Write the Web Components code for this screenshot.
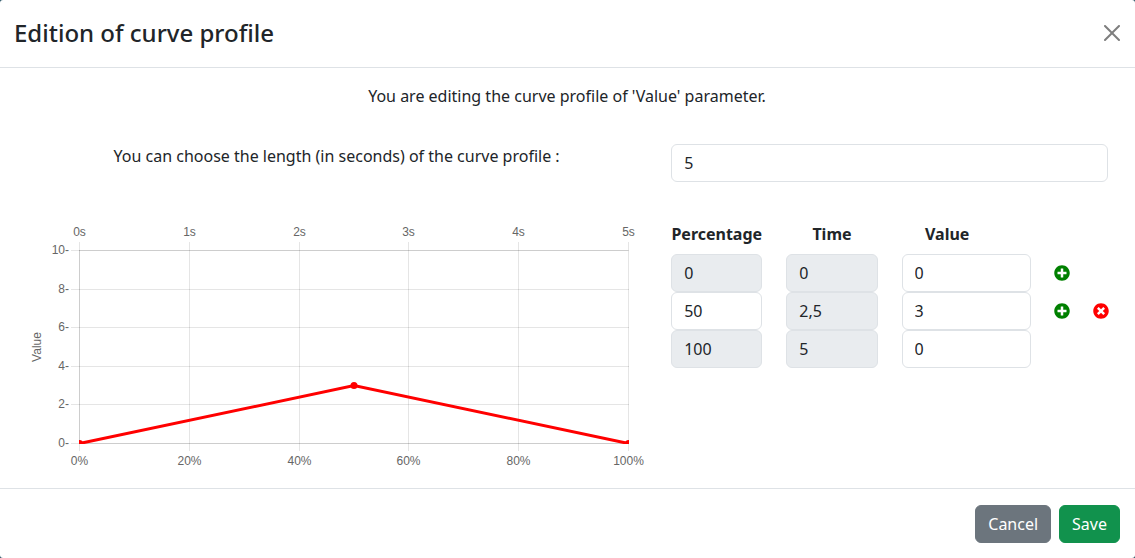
<!DOCTYPE html>
<html lang="en">
<head>
<meta charset="utf-8">
<meta name="viewport" content="width=device-width, initial-scale=1">
<title>Edition of curve profile</title>
<style>
  body {
    margin: 0;
    background: #2b5566;
    color: #212529;
    font: 16px/24px "Noto Sans", "Liberation Sans", sans-serif;
  }
</style>
</head>
<body>
<modal-dialog>
  <span slot="title">Edition of curve profile</span>
  <profile-editor parameter="Value" length="5"></profile-editor>
  <action-button slot="footer">Cancel</action-button>
  <action-button slot="footer" variant="success">Save</action-button>
</modal-dialog>

<script>
class BaseElement extends HTMLElement {
  render(html) {
    if (!this.shadowRoot) this.attachShadow({ mode: 'open' });
    this.shadowRoot.innerHTML = html;
  }
}

const POINTS = [
  { percentage: 0, time: '0', value: 0 },
  { percentage: 50, time: '2,5', value: 3 },
  { percentage: 100, time: '5', value: 0 }
];

const INPUT_STYLE = `
  input {
    display: block;
    box-sizing: border-box;
    width: 100%;
    height: 38px;
    margin: 0;
    padding: 6px 12px;
    border: 1px solid #dee2e6;
    border-radius: 6px;
    background: #fff;
    color: #212529;
    font: inherit;
  }
  input:disabled { background: #e9ecef; opacity: 1; }
`;

/* Dialog frame: title bar, body and footer */
customElements.define('modal-dialog', class extends BaseElement {
  connectedCallback() {
    this.render(`
      <style>
        :host { display: block; background: #fff; border-radius: 3px; }
        header {
          display: flex;
          align-items: center;
          justify-content: space-between;
          padding: 15px 15px 16px 14px;
          border-bottom: 1px solid #dee2e6;
        }
        h1 { margin: 0; font-size: 24px; line-height: 36px; font-weight: 500; }
        button {
          display: block;
          margin: 0;
          padding: 0;
          border: 0;
          background: none;
          color: #000;
          opacity: .5;
          cursor: pointer;
        }
        svg { display: block; width: 16px; height: 16px; }
        main { padding: 16px 15px 16px 14px; }
        footer {
          display: flex;
          justify-content: flex-end;
          gap: 8px;
          padding: 16px 15px 15px 14px;
          border-top: 1px solid #dee2e6;
        }
      </style>
      <header>
        <h1><slot name="title"></slot></h1>
        <button type="button" aria-label="Close">
          <svg viewBox="0 0 16 16" fill="currentColor"><path d="M.293.293a1 1 0 0 1 1.414 0L8 6.586 14.293.293a1 1 0 1 1 1.414 1.414L9.414 8l6.293 6.293a1 1 0 0 1-1.414 1.414L8 9.414l-6.293 6.293a1 1 0 0 1-1.414-1.414L6.586 8 .293 1.707a1 1 0 0 1 0-1.414z"/></svg>
        </button>
      </header>
      <main><slot></slot></main>
      <footer><slot name="footer"></slot></footer>
    `);
  }
});

customElements.define('action-button', class extends BaseElement {
  connectedCallback() {
    this.render(`
      <style>
        :host { display: block; --fill: #6c757d; }
        :host([variant="success"]) { --fill: #11924d; }
        button {
          display: block;
          height: 38px;
          margin: 0;
          padding: 6px 12px;
          border: 1px solid var(--fill);
          border-radius: 6px;
          background: var(--fill);
          color: #fff;
          font: inherit;
          cursor: pointer;
        }
      </style>
      <button type="button"><slot></slot></button>
    `);
  }
});

/* Length of the profile: label and text box on the 7/5 column split */
customElements.define('length-field', class extends BaseElement {
  connectedCallback() {
    this.render(`
      <style>
        :host { display: grid; grid-template-columns: 7fr 5fr; }
        label { padding: 0 12px; text-align: center; }
        div { padding: 0 12px; }
        ${INPUT_STYLE}
      </style>
      <label for="length">You can choose the length (in seconds) of the curve profile :</label>
      <div><input id="length" type="text" inputmode="numeric" value="${this.getAttribute('value')}"></div>
    `);
  }
});

/* Line chart with seconds on top, percentages below and values on the left */
customElements.define('curve-chart', class extends BaseElement {
  connectedCallback() {
    this.render(`
      <style>
        :host { display: block; min-width: 0; }
        svg { display: block; width: 100%; aspect-ratio: 5 / 2; }
        text { font: 12px "Liberation Sans", Arial, sans-serif; fill: #666; }
        .grid { stroke: rgba(0, 0, 0, .1); }
        .curve { fill: none; stroke: red; stroke-width: 3; }
        circle { fill: red; }
      </style>
      <svg role="img" aria-label="Curve profile"></svg>
    `);
    this.svg = this.shadowRoot.querySelector('svg');
    this.observer = new ResizeObserver(() => this.draw());
    this.observer.observe(this.svg);
    this.draw();
  }
  disconnectedCallback() { this.observer.disconnect(); }
  draw() {
    const box = this.svg.getBoundingClientRect();
    if (!box.width) return;
    const left = 53, right = Math.round(box.width) - 19;
    const top = 28, bottom = Math.round(box.height) - 27;
    const px = p => left + (right - left) * p / 100;
    const py = v => bottom - (bottom - top) * v / 10;
    const line = (x1, y1, x2, y2) =>
      `<line class="grid" x1="${x1}" y1="${y1}" x2="${x2}" y2="${y2}"/>`;
    let out = '';
    for (let i = 0; i <= 5; i++) {
      const x = Math.round(px(i * 20)) + .5;
      const y = Math.round(py(i * 2)) + .5;
      out += line(x, top - 8, x, bottom + 8);
      out += line(left - 8, y, right + 1, y);
      out += `<text x="${x}" y="${top - 14}" text-anchor="middle">${i}s</text>`;
      out += `<text x="${x}" y="${bottom + 22}" text-anchor="middle">${i * 20}%</text>`;
      out += `<text x="${left - 10}" y="${Math.round(y) + 3}" text-anchor="end">${i * 2}-</text>`;
    }
    out += line(left + .5, top, left + .5, bottom);
    out += line(left, top + .5, right, top + .5);
    out += line(left, bottom + .5, right, bottom + .5);
    const mid = Math.round((top + bottom) / 2);
    out += `<text transform="translate(15 ${mid}) rotate(-90)" text-anchor="middle">${this.getAttribute('label')}</text>`;
    const pts = POINTS.map(p => [px(p.percentage) + .5, py(p.value) + .5]);
    out += `<clipPath id="area"><rect x="${left}" y="${top}" width="${right - left + 1}" height="${bottom - top + 1}"/></clipPath>
      <g clip-path="url(#area)"><polyline class="curve" points="${pts.join(' ')}"/>
      ${pts.map(([x, y]) => `<circle cx="${x}" cy="${y}" r="3.5"/>`).join('')}</g>`;
    this.svg.innerHTML = out;
  }
});

/* Editable list of the points of the curve */
customElements.define('points-table', class extends BaseElement {
  connectedCallback() {
    const add = `<button type="button" class="add" aria-label="Add a point"><svg viewBox="0 0 512 512" fill="currentColor"><path d="M256 8C119 8 8 119 8 256s111 248 248 248 248-111 248-248S393 8 256 8zm144 276c0 6.6-5.4 12-12 12h-92v92c0 6.6-5.4 12-12 12h-56c-6.6 0-12-5.4-12-12v-92h-92c-6.6 0-12-5.4-12-12v-56c0-6.6 5.4-12 12-12h92v-92c0-6.6 5.4-12 12-12h56c6.6 0 12 5.4 12 12v92h92c6.6 0 12 5.4 12 12v56z"/></svg></button>`;
    const remove = `<button type="button" class="remove" aria-label="Remove the point"><svg viewBox="0 0 512 512" fill="currentColor"><path d="M256 8C119 8 8 119 8 256s111 248 248 248 248-111 248-248S393 8 256 8zm121.6 313.1c4.7 4.7 4.7 12.3 0 17L338 377.6c-4.7 4.7-12.3 4.7-17 0L256 312l-65.1 65.6c-4.7 4.7-12.3 4.7-17 0L134.4 338c-4.7-4.7-4.7-12.3 0-17l65.6-65-65.6-65.1c-4.7-4.7-4.7-12.3 0-17l39.6-39.6c4.7-4.7 12.3-4.7 17 0l65 65.7 65.1-65.6c4.7-4.7 12.3-4.7 17 0l39.6 39.6c4.7 4.7 4.7 12.3 0 17L312 256l65.6 65.1z"/></svg></button>`;
    const last = POINTS.length - 1;
    const rows = POINTS.map((p, i) => {
      const edge = i === 0 || i === last;
      return `<tr>
        <td><input type="text" aria-labelledby="percentage" value="${p.percentage}"${edge ? ' disabled' : ''}></td>
        <td><input type="text" aria-labelledby="time" value="${p.time}" disabled></td>
        <td colspan="2"><input type="text" aria-labelledby="value" value="${p.value}"></td>
        <td class="tool">${i < last ? add : ''}</td>
        <td class="tool">${edge ? '' : remove}</td>
      </tr>`;
    }).join('');
    this.render(`
      <style>
        :host { display: block; min-width: 0; }
        table { width: 100%; table-layout: fixed; border-collapse: collapse; }
        .wide { width: 25%; }
        th { padding: 0 0 8px; font-weight: 700; text-align: center; }
        td { padding: 0 12px; }
        .tool { padding: 0; }
        button {
          display: block;
          margin: 0 auto;
          padding: 0;
          border: 0;
          background: none;
          cursor: pointer;
        }
        .add { color: green; }
        .remove { color: red; }
        svg { display: block; width: 16px; height: 16px; }
        ${INPUT_STYLE}
      </style>
      <table>
        <colgroup><col class="wide"><col class="wide"><col class="wide"><col><col><col></colgroup>
        <thead><tr>
          <th id="percentage" scope="col">Percentage</th>
          <th id="time" scope="col">Time</th>
          <th id="value" scope="col">Value</th>
          <td colspan="3"></td>
        </tr></thead>
        <tbody>${rows}</tbody>
      </table>
    `);
  }
});

customElements.define('profile-editor', class extends BaseElement {
  connectedCallback() {
    const name = this.getAttribute('parameter');
    this.render(`
      <style>
        :host { display: block; }
        p { margin: 0 0 36px; text-align: center; }
        .columns {
          display: grid;
          grid-template-columns: 7fr 5fr;
          align-items: start;
          margin-top: 40px;
          padding-bottom: 2px;
        }
        curve-chart { padding: 0 12px; }
      </style>
      <p>You are editing the curve profile of '${name}' parameter.</p>
      <length-field value="${this.getAttribute('length')}"></length-field>
      <div class="columns">
        <curve-chart label="${name}"></curve-chart>
        <points-table></points-table>
      </div>
    `);
  }
});
</script>
</body>
</html>
